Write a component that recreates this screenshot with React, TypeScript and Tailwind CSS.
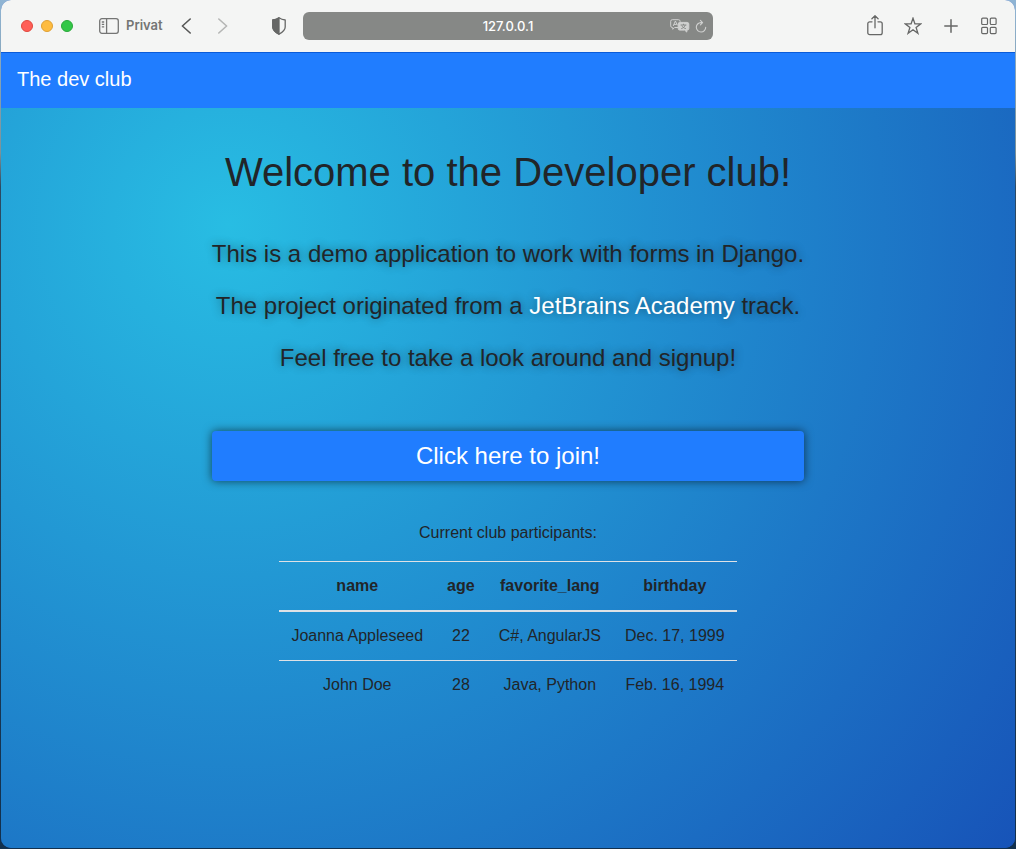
import type { ReactNode } from "react";

type Participant = { name: string; age: number; langs: string; birthday: string };

const columns = ["name", "age", "favorite_lang", "birthday"];

const participants: Participant[] = [
  { name: "Joanna Appleseed", age: 22, langs: "C#, AngularJS", birthday: "Dec. 17, 1999" },
  { name: "John Doe", age: 28, langs: "Java, Python", birthday: "Feb. 16, 1994" },
];

function IconButton({ label, children }: { label: string; children: ReactNode }) {
  return (
    <button type="button" aria-label={label} className="flex h-7 w-6 items-center justify-center">
      {children}
    </button>
  );
}

function Toolbar() {
  return (
    <header className="grid h-13 grid-cols-[1fr_40.4%_1fr] items-center bg-[#f4f5f4] text-[#666766]">
      <div className="flex items-center pl-5">
        <div className="flex gap-2">
          <button type="button" aria-label="Close" className="size-3 rounded-full border border-[#e0483e] bg-[#ff5f57]" />
          <button type="button" aria-label="Minimize" className="size-3 rounded-full border border-[#dfa033] bg-[#febc40]" />
          <button type="button" aria-label="Zoom" className="size-3 rounded-full border border-[#2aa83a] bg-[#33c748]" />
        </div>
        <button type="button" className="ml-[26px] flex items-center gap-[7px] text-[13px] font-semibold text-[#747574]">
          <svg width="20" height="16" viewBox="0 0 20 16" fill="none" stroke="currentColor" strokeWidth="1.3">
            <rect x="0.7" y="0.7" width="18.6" height="14.6" rx="2.2" />
            <path d="M7.6 1v14M2.8 4h2.4M2.8 6.4h2.4M2.8 8.8h2.4" />
          </svg>
          Privat
        </button>
        <div className="ml-3 flex gap-3">
          <IconButton label="Back">
            <svg width="11" height="16" viewBox="0 0 11 16" fill="none" stroke="#565756" strokeWidth="1.6" strokeLinecap="round" strokeLinejoin="round">
              <path d="M9.2 1L1.4 8l7.8 7" />
            </svg>
          </IconButton>
          <IconButton label="Forward">
            <svg width="11" height="16" viewBox="0 0 11 16" fill="none" stroke="#b5b6b5" strokeWidth="1.6" strokeLinecap="round" strokeLinejoin="round">
              <path d="M1.8 1l7.8 7-7.8 7" />
            </svg>
          </IconButton>
        </div>
        <div className="ml-auto mr-3">
          <IconButton label="Privacy report">
            <svg width="14" height="18" viewBox="0 0 14 18" fill="none" stroke="currentColor" strokeWidth="1.3" strokeLinejoin="round">
              <path d="M7 .8C5.4 2 3.2 2.8.8 3v7c0 3.6 3 5.4 6.2 7.1 3.2-1.7 6.2-3.5 6.2-7.1V3C10.8 2.8 8.6 2 7 .8z" />
              <path d="M7 .8C5.4 2 3.2 2.8.8 3v7c0 3.6 3 5.4 6.2 7.1z" fill="currentColor" />
            </svg>
          </IconButton>
        </div>
      </div>
      <div className="relative">
        <input
          aria-label="Address"
          defaultValue="127.0.0.1"
          className="block h-7 w-full rounded-md bg-[#868886] text-center text-[13px] font-medium text-white outline-none"
        />
        <div className="absolute inset-y-0 right-[5px] flex items-center gap-1 text-[#d0d1d0]">
          <button type="button" aria-label="Translate">
            <svg width="20" height="14" viewBox="0 0 20 14" fill="none" stroke="currentColor" strokeWidth="1">
              <path d="M8.5 8.5H4.6L2.8 10.3V8.5H2.3A1.6 1.6 0 0 1 .7 6.9V2.3A1.6 1.6 0 0 1 2.3.7h6.2a1.6 1.6 0 0 1 1.6 1.6v.6" />
              <path d="M3.2 7l2.2-5 1.9 4.2M4 5.4h2.7" />
              <path d="M9.8 3.4h7.4a1.6 1.6 0 0 1 1.6 1.6v4.5a1.6 1.6 0 0 1-1.6 1.6h-.4v2l-2.2-2H9.8a1.6 1.6 0 0 1-1.6-1.6V5a1.6 1.6 0 0 1 1.6-1.6z" fill="currentColor" />
              <path d="M10.6 6h5.8M13.5 4.8V6M11.3 9.6c2-.6 3.4-1.8 3.9-3.5M11.9 6.6c.6 1.4 1.9 2.5 3.9 3" stroke="#868886" />
            </svg>
          </button>
          <button type="button" aria-label="Reload">
            <svg width="14" height="14" viewBox="0 0 14 14" fill="none" stroke="currentColor" strokeWidth="1.1" strokeLinecap="round" strokeLinejoin="round">
              <path d="M11.7 8.2A4.7 4.7 0 1 1 7 3.6h1.3M6.4 1.4l2.2 2.2-2.2 2.2" />
            </svg>
          </button>
        </div>
      </div>
      <div className="flex items-center justify-end gap-[14px] pr-[14px]">
        <IconButton label="Share">
          <svg width="16" height="22" viewBox="0 0 16 22" fill="none" stroke="currentColor" strokeWidth="1.3" strokeLinecap="round" strokeLinejoin="round">
            <path d="M5 6.8H2.7A1.9 1.9 0 0 0 .8 8.7v9a1.9 1.9 0 0 0 1.9 1.9h10.6a1.9 1.9 0 0 0 1.9-1.900v-9a1.9 1.9 0 0 0-1.9-1.900H11M8 12.800V.9M4.900 3.700L8 .8l3.100 2.900" />
          </svg>
        </IconButton>
        <IconButton label="Bookmark">
          <svg width="18" height="18" viewBox="0 0 18 18" fill="none" stroke="currentColor" strokeWidth="1.3" strokeLinejoin="miter">
            <path d="M9 1.200l1.900 5.600h5.900l-4.700 3.600 1.800 5.900L9 12.700l-4.900 3.600 1.800-5.900-4.700-3.600h5.900z" />
          </svg>
        </IconButton>
        <IconButton label="New tab">
          <svg width="14" height="14" viewBox="0 0 14 14" fill="none" stroke="currentColor" strokeWidth="1.5" strokeLinecap="round">
            <path d="M7 .8v12.4M.8 7h12.4" />
          </svg>
        </IconButton>
        <IconButton label="Tab overview">
          <svg width="16" height="18" viewBox="0 0 16 18" fill="none" stroke="currentColor" strokeWidth="1.2">
            <rect x="0.7" y="1.2" width="5.8" height="6.3" rx="1" />
            <rect x="9.3" y="1.2" width="5.8" height="6.3" rx="1" />
            <rect x="0.7" y="10.3" width="5.8" height="6.3" rx="1" />
            <rect x="9.3" y="10.3" width="5.8" height="6.3" rx="1" />
          </svg>
        </IconButton>
      </div>
    </header>
  );
}

export default function App() {
  return (
    <div className="flex min-h-screen flex-col bg-[linear-gradient(#8fb4d4_0%,#7c9298_18%,#2c4a63_22%,#12304d_100%)] px-px pb-px">
      <div className="flex flex-1 flex-col overflow-hidden rounded-[10px] bg-[#1754b8] font-['Inter',sans-serif]">
        <Toolbar />
        <div className="flex flex-1 flex-col bg-[radial-gradient(circle_farthest-corner_at_22.4%_21.7%,#28bde3_0%,#1753b8_100.2%)] font-['Liberation_Sans',Arial,sans-serif] text-[#212529]">
          <nav className="flex h-14 items-center border-t border-[#0a5bd8] bg-[#207dff] px-4 pb-1">
            <a href="#" className="text-xl leading-8 text-white">The dev club</a>
          </nav>
          <main className="flex flex-col items-center pt-10 text-center">
            <h1 className="text-[40px] leading-12">Welcome to the Developer club!</h1>
            <div className="mt-10 flex flex-col gap-4 text-2xl leading-9 text-shadow-[0_0_10px_rgb(0_0_0/0.45)]">
              <p>This is a demo application to work with forms in Django.</p>
              <p>
                The project originated from a <a href="#" className="text-white">JetBrains Academy</a> track.
              </p>
              <p>Feel free to take a look around and signup!</p>
              <a
                href="#"
                className="mt-[39px] block rounded bg-[#207dff] py-[7px] text-white shadow-[0_0_10px_rgb(0_0_0/0.6)] text-shadow-none"
              >
                Click here to join!
              </a>
            </div>
            <table className="mt-10 border-collapse text-base leading-6">
              <caption className="pb-4">Current club participants:</caption>
              <thead>
                <tr className="border-t border-b-2 border-[#dee2e6]">
                  {columns.map((column) => (
                    <th key={column} scope="col" className="p-3 font-bold">{column}</th>
                  ))}
                </tr>
              </thead>
              <tbody>
                {participants.map((person) => (
                  <tr key={person.name} className="border-b border-[#dee2e6] last:border-b-0">
                    <td className="p-3">{person.name}</td>
                    <td className="p-3">{person.age}</td>
                    <td className="p-3">{person.langs}</td>
                    <td className="p-3">{person.birthday}</td>
                  </tr>
                ))}
              </tbody>
            </table>
          </main>
        </div>
      </div>
    </div>
  );
}
